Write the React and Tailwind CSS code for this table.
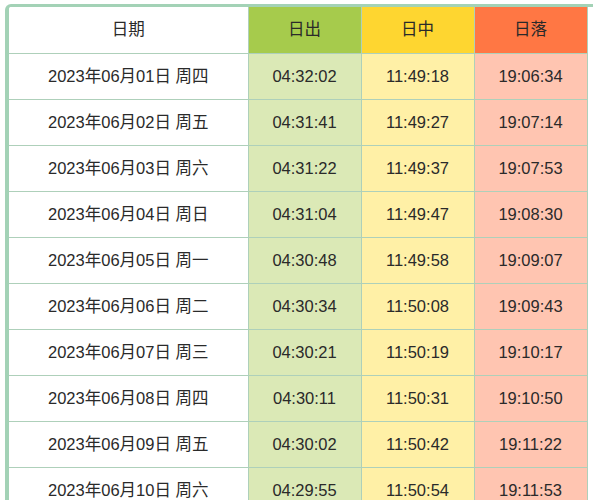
import React from "react";

const rows = [
    ["2023年06月01日 周四", "04:32:02", "11:49:18", "19:06:34"],
    ["2023年06月02日 周五", "04:31:41", "11:49:27", "19:07:14"],
    ["2023年06月03日 周六", "04:31:22", "11:49:37", "19:07:53"],
    ["2023年06月04日 周日", "04:31:04", "11:49:47", "19:08:30"],
    ["2023年06月05日 周一", "04:30:48", "11:49:58", "19:09:07"],
    ["2023年06月06日 周二", "04:30:34", "11:50:08", "19:09:43"],
    ["2023年06月07日 周三", "04:30:21", "11:50:19", "19:10:17"],
    ["2023年06月08日 周四", "04:30:11", "11:50:31", "19:10:50"],
    ["2023年06月09日 周五", "04:30:02", "11:50:42", "19:11:22"],
    ["2023年06月10日 周六", "04:29:55", "11:50:54", "19:11:53"],
];

export default function App() {
    return (
        <div className="w-[593px] h-[500px] overflow-hidden bg-white">
            <div className="ml-[5px] mt-[4px] w-[640px] border-l-4 border-t-[3px] border-[#a3d2b6] rounded-tl-md overflow-hidden">
                <table
                    className="border-collapse text-[16.5px] text-[#2a2a2a] table-fixed"
                    style={{ fontFamily: '"Liberation Sans", "Noto Sans CJK SC", sans-serif' }}
                >
                    <colgroup>
                        <col className="w-[239px]" />
                        <col className="w-[113px]" />
                        <col className="w-[113px]" />
                        <col className="w-[113px]" />
                    </colgroup>
                    <thead>
                        <tr className="h-[46px]">
                            <th className="font-normal bg-white border-r border-b border-[#aed0ba]">日期</th>
                            <th className="font-normal bg-[#a6cb4c] border-r border-b border-[#aed0ba]">日出</th>
                            <th className="font-normal bg-[#fed630] border-r border-b border-[#aed0ba]">日中</th>
                            <th className="font-normal bg-[#ff7744] border-r border-b border-[#aed0ba]">日落</th>
                        </tr>
                    </thead>
                    <tbody>
                        {rows.map((row, index) => (
                            <tr className="h-[46px]" key={index}>
                                <td className="text-center bg-white border-r border-b border-[#aed0ba]">{row[0]}</td>
                                <td className="text-center bg-[#dbe9b6] border-r border-b border-[#aed0ba]">{row[1]}</td>
                                <td className="text-center bg-[#fff0a6] border-r border-b border-[#aed0ba]">{row[2]}</td>
                                <td className="text-center bg-[#ffc5b1] border-r border-b border-[#aed0ba]">{row[3]}</td>
                            </tr>
                        ))}
                    </tbody>
                </table>
            </div>
        </div>
    );
}
